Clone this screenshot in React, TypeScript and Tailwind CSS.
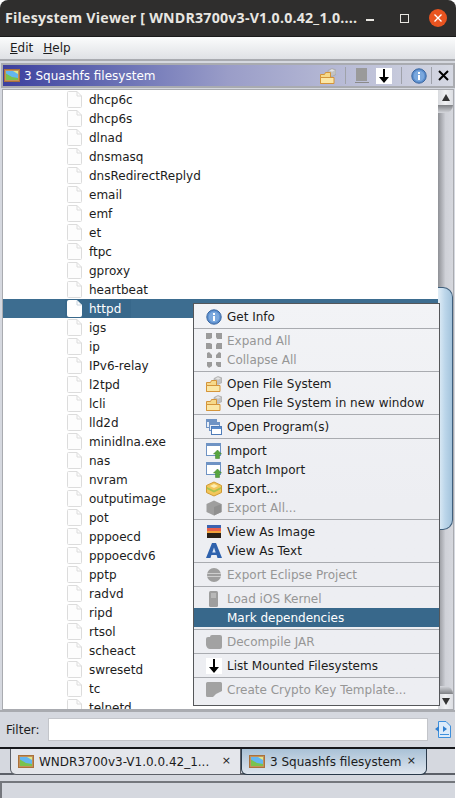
const FONT = "font-['DejaVu_Sans','Liberation_Sans',sans-serif]";

const files = [
  "dhcp6c", "dhcp6s", "dlnad", "dnsmasq", "dnsRedirectReplyd", "email", "emf", "et", "ftpc", "gproxy",
  "heartbeat", "httpd", "igs", "ip", "IPv6-relay", "l2tpd", "lcli", "lld2d", "minidlna.exe", "nas",
  "nvram", "outputimage", "pot", "pppoecd", "pppoecdv6", "pptp", "radvd", "ripd", "rtsol", "scheact",
  "swresetd", "tc", "telnetd",
];

function FileIcon({ selected }: { selected?: boolean }) {
  return (
    <svg width="15" height="17" viewBox="0 0 15 17" className="shrink-0">
      <path
        d="M1.5 .5H10L14.5 5V15.5Q14.5 16.5 13.5 16.5H1.5Q.5 16.5 .5 15.5V1.5Q.5 .5 1.5 .5Z"
        fill={selected ? "#ffffff" : "#fdfdfd"}
        stroke={selected ? "#ffffff" : "#dcdcdc"}
      />
      <path d="M10 .5V5H14.5" fill="none" stroke={selected ? "#c8d4de" : "#dcdcdc"} />
    </svg>
  );
}

function PictureIcon() {
  return (
    <svg width="16" height="13" viewBox="0 0 16 13" className="shrink-0">
      <rect x="0" y="0" width="16" height="13" fill="#a9713b" />
      <rect x="1" y="1" width="14" height="11" fill="#c4915a" />
      <rect x="2" y="2" width="12" height="9" fill="#63b6f0" />
      <path d="M2 4.5L8 8L14 9V11H2Z" fill="#79c24e" />
      <path d="M9 2H14V5Z" fill="#dfe88a" />
    </svg>
  );
}

function InfoIcon() {
  return (
    <svg width="16" height="16" viewBox="0 0 16 16">
      <circle cx="8" cy="8" r="7.2" fill="#5b8fcf" stroke="#3a669f" />
      <circle cx="8" cy="8" r="5.4" fill="#7ba8dd" />
      <rect x="7" y="7" width="2" height="5" fill="#ffffff" />
      <rect x="7" y="4" width="2" height="2" fill="#ffffff" />
    </svg>
  );
}

function FolderDiskIcon() {
  return (
    <svg width="16" height="16" viewBox="0 0 16 16">
      <path d="M8 2.5L12 .5L16 2V6.5L12 8.5L8 6.5Z" fill="#c2c2c2" stroke="#9f9f9f" strokeWidth=".6" />
      <path d="M9.5 2.5L12 1.3L14.5 2.5L12 3.7Z" fill="#e4e4e4" />
      <path d="M.5 6.5H4.5L5.5 4.5H10.5V15.5H.5Z" fill="#f6d98a" stroke="#d4943a" />
      <path d="M.5 9.5H14V15.5H.5Z" fill="#fbe7a6" stroke="#d4943a" />
    </svg>
  );
}

function DownArrowIcon() {
  return (
    <span className="flex h-4 w-4 items-center justify-center bg-white">
      <svg width="10" height="14" viewBox="0 0 10 14">
        <path d="M4 0H6V8H10L5 14L0 8H4Z" fill="#000000" />
      </svg>
    </span>
  );
}

function MenuIcon({ name }: { name: string }) {
  if (name === "info") return <InfoIcon />;
  if (name === "folder") return <FolderDiskIcon />;
  if (name === "arrow") return <DownArrowIcon />;
  if (name === "expand")
    return (
      <svg width="16" height="16" viewBox="0 0 16 16" fill="#9b9b9b">
        <path d="M0 0H6V5L4 6H0ZM10 0H16V6H11L10 4ZM0 10H4L6 11V16H0ZM11 10H16V16H10V12Z" />
      </svg>
    );
  if (name === "collapse")
    return (
      <svg width="16" height="16" viewBox="0 0 16 16" fill="#9b9b9b">
        <path d="M1 1L3 0L6 3V6H1ZM10 3L13 0L15 1V6H10ZM1 10H6V14L3 16L1 14ZM10 10H15V15H12L10 13Z" />
      </svg>
    );
  if (name === "windows")
    return (
      <svg width="16" height="16" viewBox="0 0 16 16">
        <rect x=".5" y=".5" width="10" height="8" fill="#e8eef7" stroke="#6f93c4" />
        <rect x="1" y="1" width="9" height="2" fill="#6f93c4" />
        <rect x="3.5" y="3.5" width="10" height="8" fill="#e8eef7" stroke="#6f93c4" />
        <rect x="4" y="4" width="9" height="2" fill="#6f93c4" />
        <rect x="5.5" y="7.5" width="10" height="8" fill="#ffffff" stroke="#4f7cb8" />
        <rect x="6" y="8" width="9" height="2" fill="#5a8acb" />
      </svg>
    );
  if (name === "import")
    return (
      <svg width="16" height="16" viewBox="0 0 16 16">
        <rect x=".5" y=".5" width="14" height="12" fill="#ffffff" stroke="#6f93c4" />
        <rect x="1" y="1" width="13" height="2" fill="#6f93c4" />
        <path d="M11.5 7L15.5 11H13.5V15.5H9.5V11H7.5Z" fill="#57a53f" stroke="#3f7d2c" strokeWidth=".5" />
      </svg>
    );
  if (name === "export")
    return (
      <svg width="16" height="16" viewBox="0 0 16 16">
        <path d="M8 1L15.5 4.5V11.5L8 15L.5 11.5V4.5Z" fill="#f3c65a" stroke="#cf9a34" />
        <path d="M1 6L8 9.5L15 6V8L8 11.5L1 8Z" fill="#a9c44e" />
        <path d="M4 5L8 3L12 5L8 7Z" fill="#fdeeb2" />
      </svg>
    );
  if (name === "exportAll")
    return (
      <svg width="16" height="16" viewBox="0 0 16 16">
        <path d="M8 .5L15.5 4V12L8 15.5L.5 12V4Z" fill="#9e9e9e" />
        <path d="M8 7L15.5 4V12L8 15.5Z" fill="#8f8f8f" />
      </svg>
    );
  if (name === "image")
    return (
      <svg width="14" height="13" viewBox="0 0 14 13">
        <rect width="14" height="3" fill="#3c63b0" />
        <rect y="3" width="14" height="3" fill="#e8604c" />
        <rect y="6" width="14" height="2" fill="#f2a23c" />
        <rect y="8" width="14" height="5" fill="#2a2018" />
      </svg>
    );
  if (name === "text")
    return (
      <svg width="16" height="15" viewBox="0 0 16 15">
        <path d="M6 0H10L16 15H11.5L10.6 12H5.4L4.5 15H0Z" fill="#2f62ad" />
        <path d="M8 4.5L9.7 9.5H6.3Z" fill="#dbe7f6" />
      </svg>
    );
  if (name === "eclipse")
    return (
      <svg width="14" height="14" viewBox="0 0 14 14">
        <circle cx="7" cy="7" r="7" fill="#9e9e9e" />
        <rect y="5" width="14" height="1" fill="#cfcfcf" />
        <rect y="8" width="14" height="1" fill="#cfcfcf" />
      </svg>
    );
  if (name === "phone")
    return (
      <svg width="10" height="16" viewBox="0 0 10 16">
        <rect width="9" height="16" rx="1.5" fill="#9e9e9e" />
        <rect x="2" y="2" width="5" height="5" fill="#b8b8b8" />
      </svg>
    );
  if (name === "jar")
    return (
      <svg width="16" height="14" viewBox="0 0 16 14">
        <path d="M0 4Q0 2 2 2H4Q4 0 6 0H14Q16 0 16 2V12Q16 14 14 14H4Q1 14 0 10Z" fill="#a2a2a2" />
      </svg>
    );
  if (name === "key")
    return (
      <svg width="16" height="15" viewBox="0 0 16 15">
        <path d="M1.5 0H14.5Q16 0 16 1.5V9L10 12L7 15H1.5Q0 15 0 13.5V1.5Q0 0 1.5 0Z" fill="#a2a2a2" />
      </svg>
    );
  return null;
}

type Item = { label?: string; icon?: string; disabled?: boolean; active?: boolean };

const menuItems: Item[] = [
  { label: "Get Info", icon: "info" },
  {},
  { label: "Expand All", icon: "expand", disabled: true },
  { label: "Collapse All", icon: "collapse", disabled: true },
  {},
  { label: "Open File System", icon: "folder" },
  { label: "Open File System in new window", icon: "folder" },
  {},
  { label: "Open Program(s)", icon: "windows" },
  {},
  { label: "Import", icon: "import" },
  { label: "Batch Import", icon: "import" },
  { label: "Export...", icon: "export" },
  { label: "Export All...", icon: "exportAll", disabled: true },
  {},
  { label: "View As Image", icon: "image" },
  { label: "View As Text", icon: "text" },
  {},
  { label: "Export Eclipse Project", icon: "eclipse", disabled: true },
  {},
  { label: "Load iOS Kernel", icon: "phone", disabled: true },
  { label: "Mark dependencies", active: true },
  {},
  { label: "Decompile JAR", icon: "jar", disabled: true },
  {},
  { label: "List Mounted Filesystems", icon: "arrow" },
  {},
  { label: "Create Crypto Key Template...", icon: "key", disabled: true },
];

function ContextMenu() {
  return (
    <div className="absolute left-[193px] top-[303px] z-10 h-[403px] w-[247px] border border-[#55575a] bg-gradient-to-b from-[#f2f3f6] via-[#edeef2] to-[#edeef2] pt-[3px]">
      {menuItems.map((item, i) =>
        item.label ? (
          <div
            key={i}
            className={`flex h-[19px] items-center pl-[12px] text-[12px] ${
              item.active ? "bg-[#38688b] text-white" : item.disabled ? "text-[#969696]" : "text-[#1c1c1c]"
            }`}
          >
            <span className="flex w-[21px] shrink-0 items-center justify-center pr-[5px]">
              {item.icon && <MenuIcon name={item.icon} />}
            </span>
            <span>{item.label}</span>
          </div>
        ) : (
          <div key={i} className="flex h-[5px] items-center">
            <div className="h-px w-full bg-[#a9abb0]" />
          </div>
        ),
      )}
    </div>
  );
}

function Scrollbar() {
  return (
    <div className="flex w-[15px] shrink-0 flex-col bg-gradient-to-r from-[#8f9196] via-[#cfd1d7] to-[#d6d8de]">
      <div className="flex h-[15px] shrink-0 items-center justify-center bg-gradient-to-r from-[#d8dade] via-[#f0f1f3] to-[#dcdee3]">
        <div className="h-0 w-0 border-x-[4px] border-b-[7px] border-x-transparent border-b-[#333333]" />
      </div>
      <div className="h-[8px] shrink-0 rounded-br-[8px] bg-gradient-to-b from-[#7f8185] to-[#d6d8dd]" />
      <div className="h-[174px] shrink-0" />
      <div className="h-[243px] shrink-0 rounded-r-[10px] border-y border-r border-[#3f5f7c] bg-gradient-to-r from-[#e2eef7] via-[#bcd6ea] to-[#a3c3dc]" />
      <div className="flex-1" />
      <div className="h-[8px] shrink-0 rounded-tr-[8px] bg-gradient-to-t from-[#7f8185] to-[#d6d8dd]" />
      <div className="flex h-[15px] shrink-0 items-center justify-center bg-gradient-to-r from-[#d8dade] via-[#f0f1f3] to-[#dcdee3]">
        <div className="h-0 w-0 border-x-[4px] border-t-[7px] border-x-transparent border-t-[#333333]" />
      </div>
    </div>
  );
}

function Tree() {
  return (
    <div className="relative ml-[2px] mr-[1px] flex h-[621px] border border-[#a9abb0] bg-white">
      <div className="h-full min-w-0 flex-1 overflow-hidden">
        {files.map((name) => {
          const selected = name === "httpd";
          return (
            <div
              key={name}
              className={`flex h-[19px] items-center pl-[62px] ${selected ? "bg-[#3d6d90]" : ""}`}
            >
              <div
                className={`flex h-full items-center pl-[2px] ${selected ? "w-[66px] bg-[#38688b]" : ""}`}
              >
                <FileIcon selected={selected} />
                <span className={`ml-[7px] text-[12px] ${selected ? "text-white" : "text-[#1c1c1c]"}`}>
                  {name}
                </span>
              </div>
            </div>
          );
        })}
      </div>
      <Scrollbar />
    </div>
  );
}

export default function App() {
  return (
    <div className={`relative flex h-[801px] w-[456px] flex-col overflow-hidden bg-white ${FONT}`}>
      {/* title bar */}
      <div className="flex h-[37px] shrink-0 items-center rounded-t-[8px] border-b border-[#1a1a1a] bg-[#2f2e2d] pl-[5px]">
        <span className="w-[361px] shrink-0 whitespace-nowrap font-['Open_Sans',sans-serif] text-[14.2px] font-bold tracking-[0.2px] text-[#e8e6e1]">
          Filesystem Viewer [ WNDR3700v3-V1.0.0.42_1.0....
        </span>
        <div className="mt-[4px] h-[2px] w-[8px] shrink-0 bg-[#e8e6e1]" />
        <div className="ml-[26px] h-[9px] w-[9px] shrink-0 border-[1.5px] border-[#e8e6e1]" />
        <div className="ml-[20px] flex h-[18px] w-[18px] shrink-0 items-center justify-center rounded-full bg-[#e95420]">
          <svg width="10" height="10" viewBox="0 0 10 10">
            <path d="M1.5 1.5L8.5 8.5M8.5 1.5L1.5 8.5" stroke="#ffffff" strokeWidth="1.4" />
          </svg>
        </div>
      </div>

      <div className="mr-[1px] flex h-[761px] shrink-0 flex-col bg-[#d5d8df]">
        {/* menu bar */}
        <div className="flex h-[24px] shrink-0 items-center gap-[10px] border-b-2 border-[#a9abb0] bg-gradient-to-b from-[#fbfcfc] to-[#dfe1e5] pl-[10px] text-[12px] text-[#1c1c1c]">
          <span>
            <span className="underline">E</span>dit
          </span>
          <span>
            <span className="underline">H</span>elp
          </span>
        </div>
        {/* internal frame title */}
        <div className="ml-[1px] mt-[2px] flex h-[25px] shrink-0 items-center border-2 border-[#a9abb0] bg-gradient-to-r from-[#3d3f9e] via-[#9a9dc8] to-[#d5d8e2] pl-[1px] pr-[2px] text-[12px] text-white">
          <PictureIcon />
          <span className="ml-[4px] flex-1">3 Squashfs filesystem</span>
          <FolderDiskIcon />
          <div className="ml-[9px] h-[17px] w-px bg-[#9fa2aa]" />
          <svg width="14" height="15" viewBox="0 0 14 15" className="ml-[9px]">
            <rect x="1" y="0" width="11" height="13" fill="#9a9a9a" />
            <rect x="0" y="14" width="14" height="1" fill="#8a8a8a" />
          </svg>
          <span className="ml-[7px]">
            <DownArrowIcon />
          </span>
          <div className="ml-[9px] h-[17px] w-px bg-[#9fa2aa]" />
          <span className="ml-[9px]">
            <InfoIcon />
          </span>
          <div className="ml-[4px] h-[17px] w-px bg-[#9fa2aa]" />
          <svg width="11" height="11" viewBox="0 0 11 11" className="ml-[6px]">
            <path d="M1 1L10 10M10 1L1 10" stroke="#000000" strokeWidth="2" />
          </svg>
          <div className="w-[2px]" />
        </div>
        <div className="mt-[1px] shrink-0">
          <Tree />
        </div>
        {/* filter row */}
        <div className="flex h-[37px] shrink-0 items-center border-t-2 border-[#a9abb0] pl-[6px] pr-[2px] text-[12px] text-[#1c1c1c]">
          <span className="w-[42px] shrink-0">Filter:</span>
          <div className="h-[23px] w-[380px] shrink-0 border border-[#c3c5ca] bg-white" />
          <svg width="16" height="17" viewBox="0 0 16 17" className="ml-[7px]">
            <path d="M3.5 .5H11L15.5 5V16.5H3.5Z" fill="#dcebfa" stroke="#3d8fdc" />
            <path d="M0 8L4 5V11ZM12 8L8 5V11Z" fill="#2f7fd0" />
            <rect x="5" y="13" width="9" height="1" fill="#3d8fdc" />
          </svg>
        </div>
        {/* tabs */}
        <div className="h-[2px] shrink-0 bg-[#16181c]" />
        <div className="flex h-[26px] shrink-0 items-end border-b-2 border-[#5c6068] pl-[10px]">
          <div className="-mb-[2px] flex h-[26px] w-[231px] items-center rounded-bl-[6px] border border-t-0 border-[#5c6068] bg-[#e4e6eb] pl-[7px] text-[12px] text-[#1c1c1c]">
            <PictureIcon />
            <span className="ml-[5px] flex-1 whitespace-nowrap">WNDR3700v3-V1.0.0.42_1...</span>
            <span className="mr-[9px] text-[11px]">×</span>
          </div>
          <div className="-mb-[2px] flex h-[26px] w-[186px] items-center rounded-b-[6px] border border-t-0 border-[#2a3a4a] bg-gradient-to-b from-[#a9c1d6] to-[#dfe6ee] pl-[7px] text-[12px] text-[#1c1c1c]">
            <PictureIcon />
            <span className="ml-[5px] flex-1 whitespace-nowrap">3 Squashfs filesystem</span>
            <span className="mr-[10px] text-[11px]">×</span>
          </div>
        </div>
        {/* status bar */}
        <div className="mt-[6px] flex-1 border-l-2 border-t-2 border-[#74777d]" />
      </div>
      <ContextMenu />
    </div>
  );
}
